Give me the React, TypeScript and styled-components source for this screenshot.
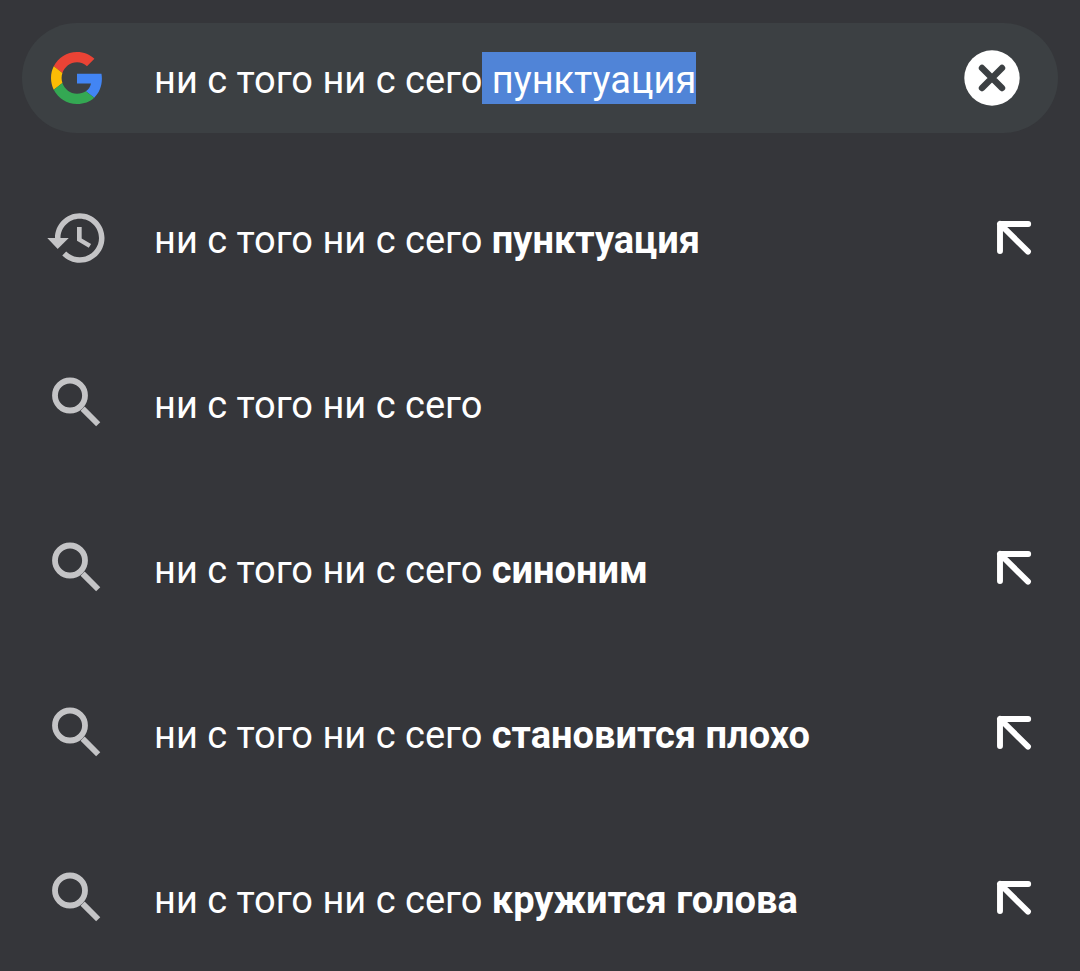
import React, { useEffect, useRef } from 'react';
import styled, { createGlobalStyle } from 'styled-components';

const GlobalStyle = createGlobalStyle`
  * { box-sizing: border-box; }
  body {
    margin: 0;
    background: #35363a;
    color: #fff;
    font-family: Roboto, "Noto Sans", sans-serif;
    font-size: 38px;
  }
  button, textarea {
    margin: 0;
    padding: 0;
    border: 0;
    background: none;
    color: inherit;
    font: inherit;
    outline: none;
  }
  button { cursor: pointer; }
  svg { display: block; }
`;

const Page = styled.main`
  display: flex;
  flex-direction: column;
  gap: 39px;
  padding-top: 23px;
`;

const SearchBar = styled.form`
  display: flex;
  align-items: center;
  height: 110px;
  margin: 0 22px;
  padding: 0 38px 0 29px;
  border-radius: 55px;
  background: #3c4043;
`;

const SearchInput = styled.textarea`
  flex: 1;
  min-width: 0;
  height: 52px;
  margin: 0 24px 0 51px;
  overflow: hidden;
  line-height: 56px;
  white-space: pre;
  resize: none;
  caret-color: transparent;

  &::selection {
    background: rgba(80, 133, 216, 0.996);
    color: #fff;
  }
`;

const ClearButton = styled.button`
  flex: none;
  width: 56px;
  height: 56px;
`;

const Suggestions = styled.ul`
  display: flex;
  flex-direction: column;
  gap: 34px;
  margin: 0;
  padding: 0;
  list-style: none;
`;

const Row = styled.li`
  display: flex;
  align-items: center;
  height: 131px;
  padding: 0 40px 0 44px;
`;

const SuggestionButton = styled.button`
  display: flex;
  flex: 1;
  align-items: center;
  gap: 44px;
  min-width: 0;
  height: 100%;
  text-align: left;
`;

const Label = styled.span`
  padding-top: 4px;
  line-height: 52px;
  white-space: pre;
`;

const Completion = styled.b`
  font-weight: 700;
`;

const FillButton = styled.button`
  flex: none;
  width: 52px;
  height: 52px;
`;

const GoogleLogo = () => (
  <svg width="52" height="52" viewBox="0 0 48 48" role="img" aria-label="Google">
    <path fill="#ea4335" d="M24 9.5c3.54 0 6.71 1.22 9.21 3.6l6.85-6.85C35.9 2.38 30.47 0 24 0 14.62 0 6.51 5.38 2.56 13.22l7.98 6.19C12.43 13.72 17.74 9.5 24 9.5z" />
    <path fill="#4285f4" d="M46.98 24.55c0-1.57-.15-3.09-.38-4.55H24v9.02h12.94c-.58 2.96-2.26 5.48-4.78 7.18l7.73 6c4.51-4.18 7.09-10.36 7.09-17.65z" />
    <path fill="#fbbc05" d="M10.53 28.59c-.48-1.45-.76-2.99-.76-4.59s.27-3.14.76-4.59l-7.98-6.19C.92 16.46 0 20.12 0 24c0 3.88.92 7.54 2.56 10.78l7.97-6.19z" />
    <path fill="#34a853" d="M24 48c6.48 0 11.93-2.13 15.89-5.81l-7.73-6c-2.15 1.45-4.92 2.3-8.16 2.3-6.26 0-11.57-4.22-13.47-9.91l-7.98 6.19C6.51 42.62 14.62 48 24 48z" />
  </svg>
);

const ClearIcon = () => (
  <svg width="56" height="56" viewBox="0 0 56 56" aria-hidden="true">
    <circle cx="28" cy="28" r="27.7" fill="#fff" />
    <path d="M18 18l20 20M38 18L18 38" stroke="#3c4043" strokeWidth="6.4" strokeLinecap="round" />
  </svg>
);

const HistoryIcon = () => (
  <svg width="66" height="66" viewBox="0 0 24 24" fill="#c4c4c6" aria-hidden="true">
    <path d="M13 3c-4.97 0-9 4.03-9 9H1.2l3.7 3.9.06.1L9 12H6c0-3.87 3.13-7 7-7s7 3.13 7 7-3.13 7-7 7c-1.93 0-3.68-.79-4.94-2.06l-1.42 1.42C8.27 19.99 10.51 21 13 21c4.97 0 9-4.03 9-9s-4.03-9-9-9zm-1 5v5l4.28 2.54.84-1.36-3.42-2.03V8H12z" />
  </svg>
);

const SearchIcon = () => (
  <svg width="66" height="66" viewBox="0 0 66 66" fill="none" stroke="#c4c4c6" aria-hidden="true">
    <circle cx="26" cy="25.5" r="15" strokeWidth="5.8" />
    <path d="M38.6 38.6L54.2 54.2" strokeWidth="5.8" />
  </svg>
);

const FillIcon = () => (
  <svg
    width="52"
    height="52"
    viewBox="0 0 52 52"
    fill="none"
    stroke="#fff"
    strokeWidth="5.9"
    strokeLinecap="round"
    strokeLinejoin="round"
    aria-hidden="true"
  >
    <path d="M12 39V12H40.2M12 12L40 39.6" />
  </svg>
);

const query = 'ни с того ни с сего';
const autocomplete = ' пунктуация';

const suggestions = [
  { completion: 'пунктуация', recent: true },
  { completion: '', recent: false },
  { completion: 'синоним', recent: false },
  { completion: 'становится плохо', recent: false },
  { completion: 'кружится голова', recent: false },
];

export default function App() {
  const inputRef = useRef<HTMLTextAreaElement>(null);

  useEffect(() => {
    const input = inputRef.current;
    if (!input) return;
    input.focus({ preventScroll: true });
    input.setSelectionRange(query.length, input.value.length);
  }, []);

  return (
    <>
      <GlobalStyle />
      <Page>
        <SearchBar role="search" onSubmit={(event) => event.preventDefault()}>
          <GoogleLogo />
          <SearchInput
            ref={inputRef}
            rows={1}
            aria-label="Поиск"
            autoComplete="off"
            spellCheck={false}
            defaultValue={query + autocomplete}
          />
          <ClearButton type="button" aria-label="Очистить">
            <ClearIcon />
          </ClearButton>
        </SearchBar>
        <Suggestions>
          {suggestions.map(({ completion, recent }) => (
            <Row key={completion}>
              <SuggestionButton type="button">
                {recent ? <HistoryIcon /> : <SearchIcon />}
                <Label>
                  {query}
                  {completion && <Completion> {completion}</Completion>}
                </Label>
              </SuggestionButton>
              {completion && (
                <FillButton type="button" aria-label="Подставить запрос">
                  <FillIcon />
                </FillButton>
              )}
            </Row>
          ))}
        </Suggestions>
      </Page>
    </>
  );
}
